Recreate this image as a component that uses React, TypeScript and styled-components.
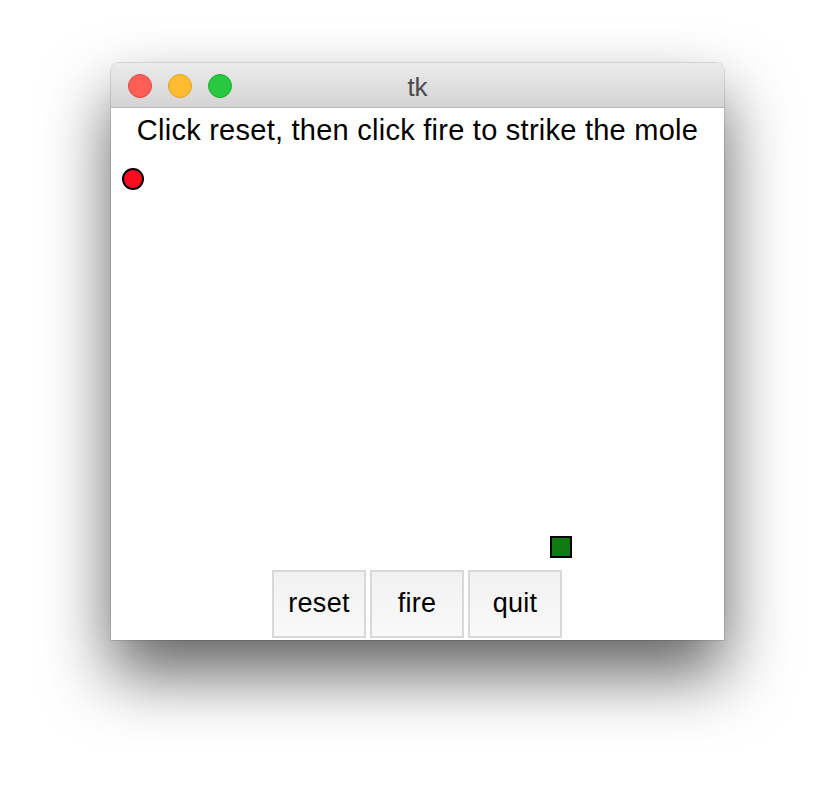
import React from "react";
import styled, { createGlobalStyle } from "styled-components";

const Global = createGlobalStyle`
  html, body { margin: 0; padding: 0; background: #ffffff; }
  body { font-family: "Liberation Sans", Arial, sans-serif; }
`;

const Page = styled.div`
  width: 836px;
  height: 800px;
  padding: 63px 0 0 111px;
  box-sizing: border-box;
  overflow: hidden;
`;

const Window = styled.div`
  width: 613px;
  height: 577px;
  display: flex;
  flex-direction: column;
  background: #ffffff;
  border-radius: 7px 7px 0 0;
  box-shadow: 0 0 0 0.5px rgba(0, 0, 0, 0.22), 0 34px 66px rgba(0, 0, 0, 0.62);
  overflow: hidden;
`;

const TitleBar = styled.div`
  position: relative;
  height: 44px;
  flex: 0 0 44px;
  display: flex;
  align-items: center;
  justify-content: center;
  background: linear-gradient(#ebebeb, #d4d4d4);
  border-bottom: 1px solid #b9b9b9;
`;

const Lights = styled.div`
  position: absolute;
  left: 17px;
  top: 11px;
  display: flex;
  gap: 16px;
`;

const Light = styled.span<{ $fill: string; $edge: string }>`
  width: 24px;
  height: 24px;
  border-radius: 50%;
  box-sizing: border-box;
  background: ${(p) => p.$fill};
  border: 1px solid ${(p) => p.$edge};
`;

const Title = styled.div`
  font-size: 26px;
  color: #4a4a4a;
  line-height: 44px;
  padding-top: 3px;
`;

const Label = styled.div`
  flex: 0 0 auto;
  padding: 5px 0 5px;
  height: 34px;
  line-height: 34px;
  font-size: 29px;
  letter-spacing: 0.25px;
  color: #000;
  text-align: center;
  white-space: nowrap;
`;

const Canvas = styled.div`
  position: relative;
  flex: 1 1 auto;
`;

const Mole = styled.div`
  position: absolute;
  left: 11px;
  top: 16px;
  width: 22px;
  height: 22px;
  box-sizing: border-box;
  border-radius: 50%;
  background: #ff0a1e;
  border: 2px solid #000;
`;

const Hammer = styled.div`
  position: absolute;
  left: 439px;
  top: 384px;
  width: 22px;
  height: 22px;
  box-sizing: border-box;
  background: #107a12;
  border: 2px solid #000;
`;

const ButtonRow = styled.div`
  flex: 0 0 auto;
  display: flex;
  justify-content: center;
  gap: 4px;
  padding: 0 1px 2px 0;
`;

const Button = styled.button`
  width: 94px;
  height: 68px;
  box-sizing: border-box;
  border: 2px solid #d8d8d8;
  background: linear-gradient(#f1f1f1, #f9f9f9);
  font-family: "Liberation Sans", Arial, sans-serif;
  font-size: 27px;
  letter-spacing: 0.3px;
  color: #000;
  padding: 0 0 2px;
  margin: 0;
  border-radius: 0;
`;

export default function App() {
  return (
    <Page>
      <Global />
      <Window>
        <TitleBar>
          <Lights>
            <Light $fill="#ff5f57" $edge="#e2463f" />
            <Light $fill="#febc2e" $edge="#e0a125" />
            <Light $fill="#28c840" $edge="#1dad2b" />
          </Lights>
          <Title>tk</Title>
        </TitleBar>
        <Label>Click reset, then click fire to strike the mole</Label>
        <Canvas>
          <Mole />
          <Hammer />
        </Canvas>
        <ButtonRow>
          <Button>reset</Button>
          <Button>fire</Button>
          <Button>quit</Button>
        </ButtonRow>
      </Window>
    </Page>
  );
}
